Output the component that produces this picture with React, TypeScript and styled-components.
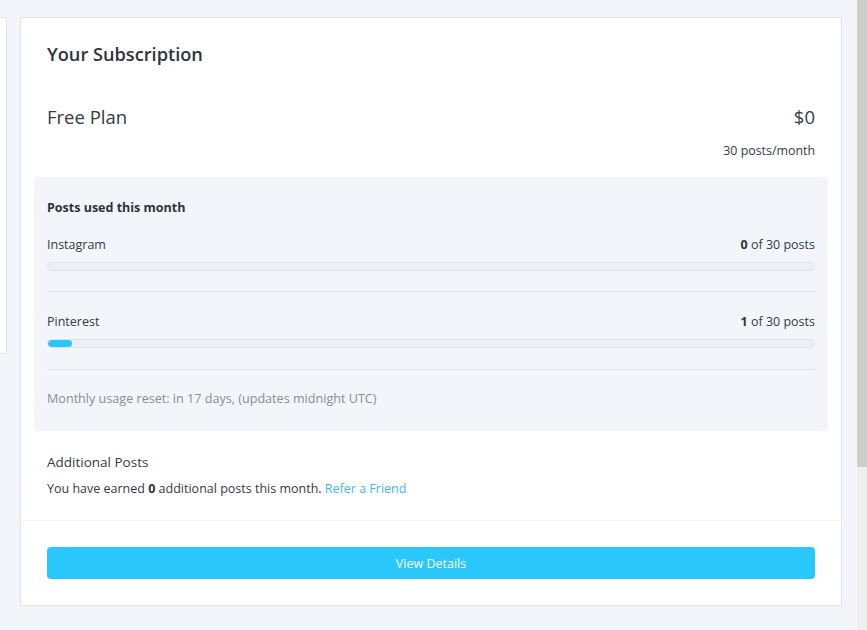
import React from "react";
import styled, { createGlobalStyle } from "styled-components";

const Global = createGlobalStyle`
  html, body { margin: 0; padding: 0; background: #f2f5f9; }
  body { font-family: "Open Sans", "Noto Sans", sans-serif; color: #343a46; }
  * { box-sizing: border-box; }
`;

const Page = styled.div`
  display: flex;
  width: 867px;
  height: 630px;
  overflow: hidden;
`;

const Content = styled.div`
  flex: 1;
  display: flex;
  align-items: flex-start;
  padding-top: 17px;
`;

const SideStub = styled.div`
  width: 7px;
  height: 337px;
  background: #fff;
  border: 1px solid #e1e6ec;
  border-left: none;
  flex-shrink: 0;
`;

const Card = styled.section`
  margin-left: 13px;
  width: 822px;
  background: #fff;
  border: 1px solid #dfe4ea;
  flex-shrink: 0;
`;

const Header = styled.div`
  padding: 22px 26px 0;
`;

const Title = styled.h2`
  margin: 0;
  font-size: 18.2px;
  line-height: 28px;
  font-weight: 600;
  color: #2d3340;
`;

const PlanRow = styled.div`
  margin-top: 35px;
  display: flex;
  justify-content: space-between;
  align-items: center;
  font-size: 18.5px;
  line-height: 28px;
  color: #343a46;
`;

const PlanNote = styled.div`
  margin-top: 11px;
  text-align: right;
  font-size: 12.4px;
  line-height: 18px;
  color: #343a46;
`;

const Panel = styled.div`
  margin: 17px 13px 0;
  padding: 22px 13px 23px;
  background: #f2f5f9;
  border-radius: 2px;
`;

const PanelTitle = styled.div`
  font-size: 12.5px;
  line-height: 18px;
  font-weight: 700;
  color: #2d3340;
`;

const UsageBlock = styled.div<{ $first?: boolean }>`
  padding-top: ${(p) => (p.$first ? "19px" : "21px")};
  padding-bottom: ${(p) => (p.$first ? "20px" : "21px")};
  border-bottom: 1px solid #dde2e9;
`;

const UsageRow = styled.div`
  display: flex;
  justify-content: space-between;
  font-size: 12.5px;
  line-height: 18px;
  color: #343a46;
  b { font-weight: 700; color: #2d3340; }
`;

const Track = styled.div`
  margin-top: 8px;
  height: 9px;
  border-radius: 5px;
  background: #eceff3;
  border: 1px solid #dde2e8;
  overflow: hidden;
`;

const Fill = styled.div`
  height: 100%;
  background: #29c7fc;
  border-radius: 5px;
`;

const ResetNote = styled.div`
  margin-top: 20px;
  font-size: 12.6px;
  line-height: 18px;
  color: #878e98;
`;

const Extra = styled.div`
  padding: 21px 26px 22px;
`;

const ExtraTitle = styled.div`
  font-size: 13.5px;
  line-height: 20px;
  color: #343a46;
`;

const ExtraText = styled.div`
  margin-top: 8px;
  font-size: 12.5px;
  line-height: 18px;
  color: #343a46;
  b { font-weight: 700; color: #2d3340; }
`;

const Link = styled.a`
  color: #45b5ec;
  text-decoration: none;
`;

const Footer = styled.div`
  border-top: 1px solid #f0f2f5;
  padding: 26px 26px 26px;
`;

const Button = styled.button`
  display: block;
  width: 100%;
  height: 32px;
  border: none;
  border-radius: 4px;
  background: #29c7fc;
  color: #fff;
  font-family: inherit;
  font-size: 12.5px;
  cursor: pointer;
`;

const ScrollTrack = styled.div`
  width: 11px;
  height: 630px;
  background: #efeff1;
  border-left: 1px solid #f8f8f9;
  flex-shrink: 0;
  display: flex;
  flex-direction: column;
`;

const ScrollThumb = styled.div`
  height: 467px;
  background: #cdcdcd;
`;

const usage = [
  { name: "Instagram", used: 0, total: 30 },
  { name: "Pinterest", used: 1, total: 30 },
];

export default function App() {
  return (
    <>
      <Global />
      <Page>
        <Content>
          <SideStub />
          <Card>
            <Header>
              <Title>Your Subscription</Title>
              <PlanRow>
                <span>Free Plan</span>
                <span>$0</span>
              </PlanRow>
              <PlanNote>30 posts/month</PlanNote>
            </Header>
            <Panel>
              <PanelTitle>Posts used this month</PanelTitle>
              {usage.map((u, i) => (
                <UsageBlock key={u.name} $first={i === 0}>
                  <UsageRow>
                    <span>{u.name}</span>
                    <span>
                      <b>{u.used}</b> of {u.total} posts
                    </span>
                  </UsageRow>
                  <Track>
                    {u.used > 0 && (
                      <Fill style={{ width: `${(u.used / u.total) * 93}%` }} />
                    )}
                  </Track>
                </UsageBlock>
              ))}
              <ResetNote>Monthly usage reset: in 17 days, (updates midnight UTC)</ResetNote>
            </Panel>
            <Extra>
              <ExtraTitle>Additional Posts</ExtraTitle>
              <ExtraText>
                You have earned <b>0</b> additional posts this month.{" "}
                <Link href="#">Refer a Friend</Link>
              </ExtraText>
            </Extra>
            <Footer>
              <Button>View Details</Button>
            </Footer>
          </Card>
        </Content>
        <ScrollTrack>
          <ScrollThumb />
        </ScrollTrack>
      </Page>
    </>
  );
}
